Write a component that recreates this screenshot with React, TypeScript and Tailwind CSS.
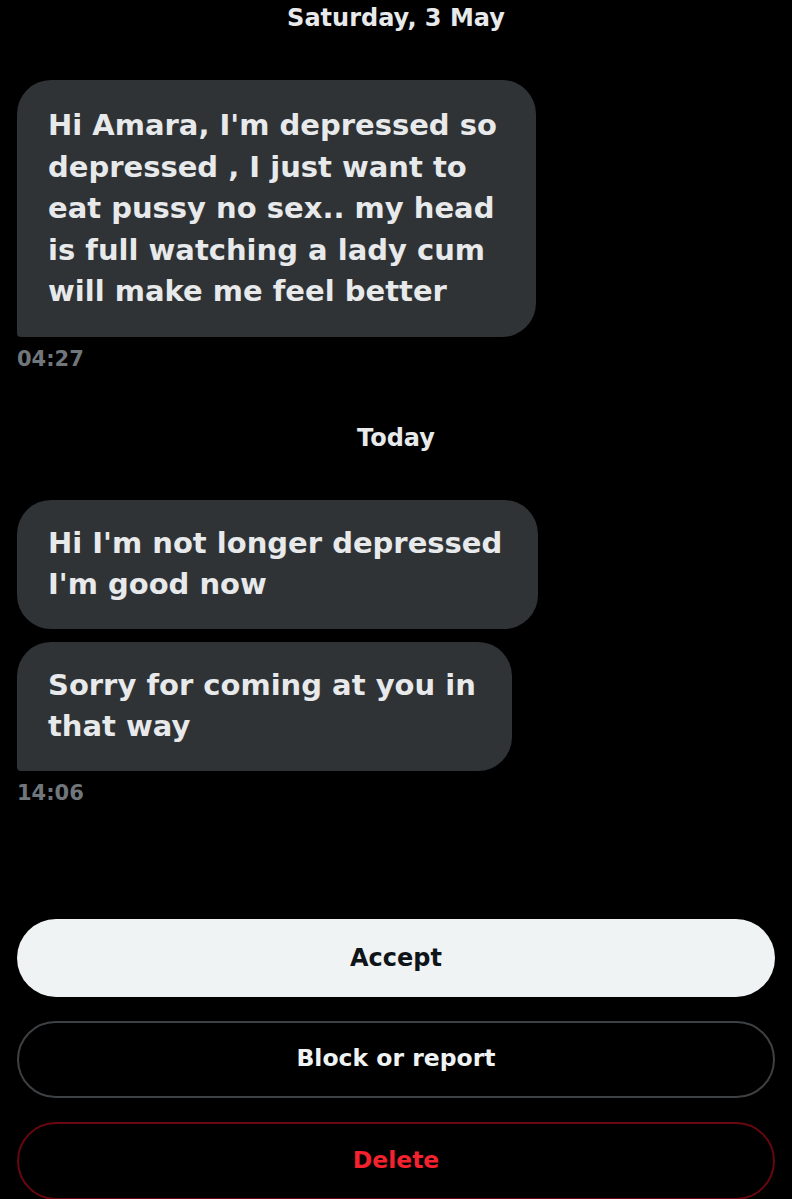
import React from "react";

const font = { fontFamily: '"DejaVu Sans", "Liberation Sans", sans-serif' };

function Bubble({ lines, width, corner }: { lines: string[]; width: string; corner: string }) {
  return (
    <div
      className={`${width} ${corner} bg-[#2f3336] rounded-[34px] pl-[31px] text-[29px] leading-[41.5px] font-bold text-[#e7e9ea] whitespace-nowrap`}
    >
      {lines.map((l, i) => (
        <div key={i}>{l}</div>
      ))}
    </div>
  );
}

export default function App() {
  return (
    <div className="w-[792px] h-[1199px] bg-black overflow-hidden flex flex-col" style={font}>
      <div className="text-center text-[24px] leading-[36px] font-bold text-[#e7e9ea]">
        Saturday, 3 May
      </div>
      <div className="mt-[44px] ml-[17px] flex flex-col">
        <Bubble
          width="w-[519px]"
          corner="rounded-bl-[4px] pt-[25px] pb-[24px]"
          lines={[
            "Hi Amara, I'm depressed so",
            "depressed , I just want to",
            "eat pussy no sex.. my head",
            "is full watching a lady cum",
            "will make me feel better",
          ]}
        />
        <div className="mt-[7px] text-[21px] leading-[30px] font-bold text-[#71767b]">04:27</div>
      </div>
      <div className="mt-[46px] text-center text-[24px] leading-[36px] font-bold text-[#e7e9ea]">
        Today
      </div>
      <div className="mt-[44px] ml-[17px] flex flex-col">
        <Bubble
          width="w-[521px]"
          corner="pt-[23px] pb-[23px]"
          lines={["Hi I'm not longer depressed", "I'm good now"]}
        />
        <div className="mt-[13px]">
          <Bubble
            width="w-[495px]"
            corner="rounded-bl-[4px] pt-[23px] pb-[23px]"
            lines={["Sorry for coming at you in", "that way"]}
          />
        </div>
        <div className="mt-[7px] text-[21px] leading-[30px] font-bold text-[#71767b]">14:06</div>
      </div>
      <div className="mt-[111px] mx-[17px] flex flex-col gap-[24px]">
        <div className="h-[78px] rounded-full bg-[#eff3f4] flex items-center justify-center text-[24px] font-bold text-[#0f1419]">
          Accept
        </div>
        <div className="h-[77px] rounded-full border-2 border-[#3e4144] flex items-center justify-center text-[23.5px] font-bold text-[#eff3f4]">
          Block or report
        </div>
        <div className="h-[78px] shrink-0 rounded-full border-2 border-[#67070f] flex items-center justify-center text-[23.5px] font-bold text-[#f4212e]">
          Delete
        </div>
      </div>
    </div>
  );
}
